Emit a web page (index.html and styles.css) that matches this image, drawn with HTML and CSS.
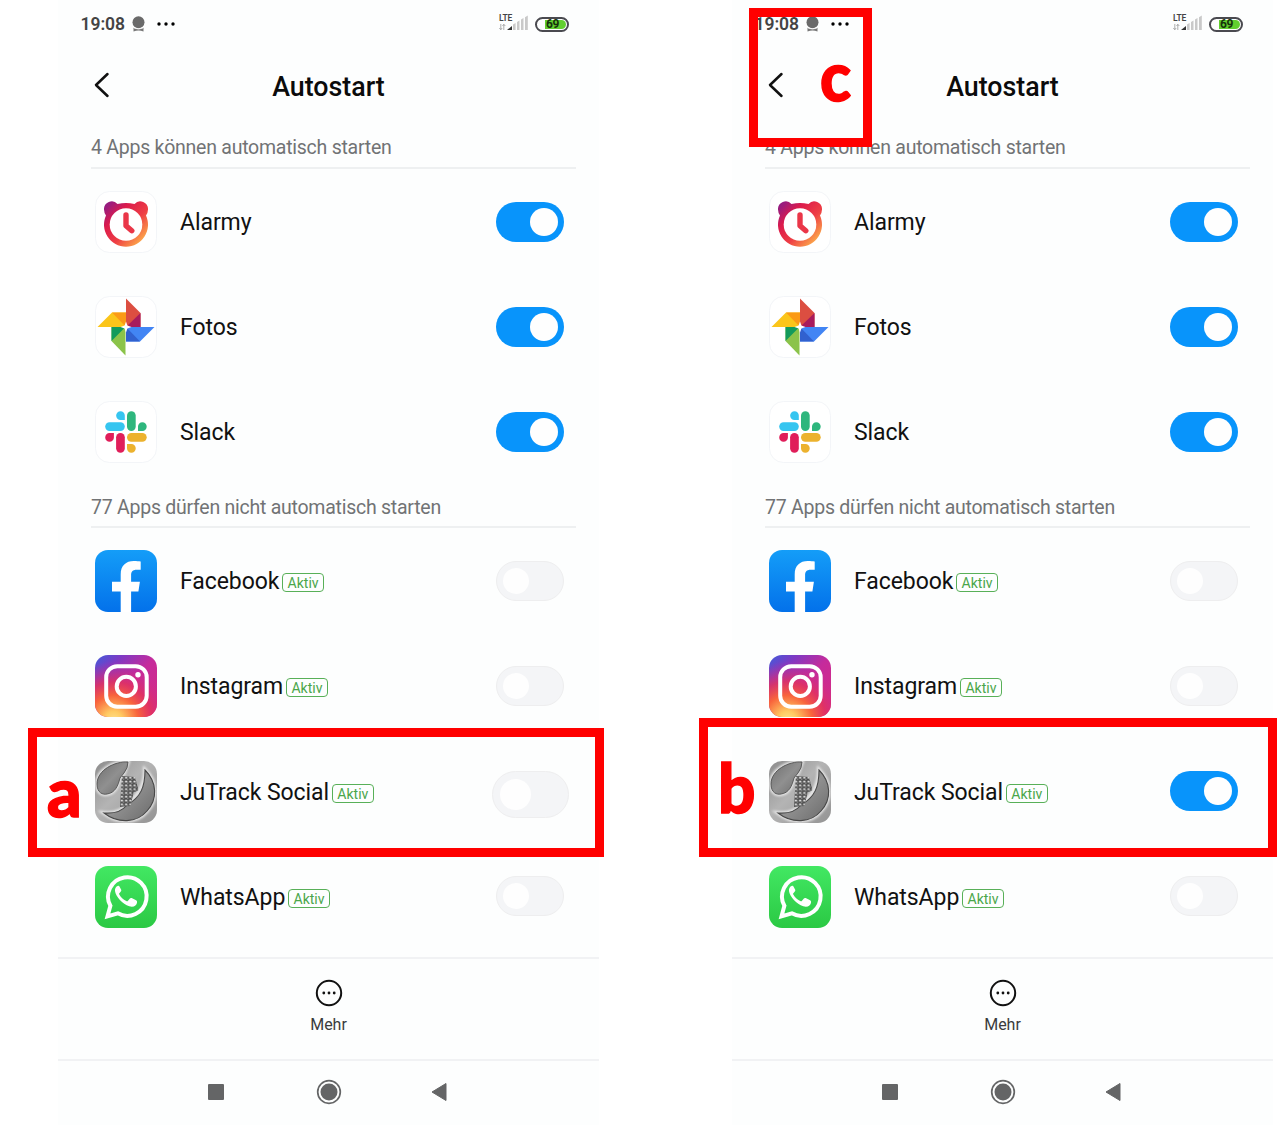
FILE: index.html
```html
<!DOCTYPE html>
<html lang="de">
<head>
<meta charset="utf-8">
<title>Autostart</title>
<link rel="stylesheet" href="styles.css">
</head>
<body>
<svg class="sprite" width="0" height="0" aria-hidden="true">
  <defs>
    <linearGradient id="gAlarm" x1="0" y1="0" x2="1" y2="1"><stop offset="0" stop-color="#8c1c86"/><stop offset=".1" stop-color="#9c1c7c"/><stop offset=".3" stop-color="#dc1b4c"/><stop offset=".58" stop-color="#ee3e44"/><stop offset=".85" stop-color="#fba04a"/></linearGradient>
    <linearGradient id="gFb" x1="0" y1="0" x2="0" y2="1"><stop offset="0" stop-color="#149df8"/><stop offset="1" stop-color="#0371ea"/></linearGradient>
    <linearGradient id="gWa" x1="0" y1="0" x2="0" y2="1"><stop offset="0" stop-color="#42e863"/><stop offset="1" stop-color="#2bc944"/></linearGradient>
    <linearGradient id="gIg" x1="0" y1="0" x2="1" y2="1"><stop offset="0" stop-color="#3f5ddb"/><stop offset=".22" stop-color="#7d3ac4"/><stop offset=".5" stop-color="#c52b9c"/><stop offset="1" stop-color="#d92b7c"/></linearGradient>
    <radialGradient id="gIg2" cx=".3" cy="1.05" r=".95"><stop offset="0" stop-color="#ffe08a"/><stop offset=".15" stop-color="#ffca62"/><stop offset=".42" stop-color="#f8643c"/><stop offset=".65" stop-color="#e2325f" stop-opacity=".85"/><stop offset="1" stop-color="#c52b9c" stop-opacity="0"/></radialGradient>
    <linearGradient id="gJu" x1="0" y1="0" x2="1" y2="1"><stop offset="0" stop-color="#8c8c8c"/><stop offset=".45" stop-color="#b4b4b4"/><stop offset="1" stop-color="#939393"/></linearGradient>
    <linearGradient id="gJu2" x1="0" y1="0" x2="1" y2="1"><stop offset="0" stop-color="#6e6e6e"/><stop offset=".5" stop-color="#909090"/><stop offset="1" stop-color="#6a6a6a"/></linearGradient>
    <pattern id="pJu" width="4.200" height="3.800" patternUnits="userSpaceOnUse"><rect width="4.200" height="3.800" fill="#4c4c4c"/><rect x=".6" y=".7" width="2.300" height="1.700" fill="#dedede"/><rect x="2.600" y="2.600" width="1.400" height=".9" fill="#a5a5a5"/></pattern>
    <filter id="soft" x="-20%" y="-20%" width="140%" height="140%"><feGaussianBlur stdDeviation="1.100"/></filter>
    <clipPath id="tile"><rect width="62" height="62" rx="13"/></clipPath>
  </defs>
  <symbol id="alarmy" viewBox="0 0 62 62">
    <rect x=".5" y=".5" width="61" height="61" rx="14" fill="#fff" stroke="#f3f5f8"/>
    <path d="M9 18.500A7.700 7.700 0 0 1 22.500 13Q31 10.800 39.500 13A7.700 7.700 0 0 1 53 18.500Q53 21.500 51 24.500A22 22 0 1 1 11 24.500Q9 21.500 9 18.500Z" fill="url(#gAlarm)"/>
    <circle cx="31" cy="33.500" r="16.300" fill="#fff"/>
    <path d="M31 24v10.700l5.800 5" fill="none" stroke="#ea3648" stroke-width="5.400" stroke-linecap="round" stroke-linejoin="round"/>
  </symbol>
  <symbol id="fotos" viewBox="0 0 62 62">
    <rect x=".5" y=".5" width="61" height="61" rx="14" fill="#fff" stroke="#f3f5f8"/>
    <path d="M31 2.500L45.500 17v14H31z" fill="#dc4e41"/><path d="M31 31L45.500 17v14z" fill="#a81b5d"/>
    <path d="M59.500 31L45 45.500H31V31z" fill="#4285f4"/><path d="M31 31L45 45.500H31z" fill="#3161cf"/>
    <path d="M30.500 59.500L16.500 45V31h14z" fill="#8bc34a"/><path d="M30.500 31L16.500 45V31z" fill="#129a5c"/>
    <path d="M2.500 31L17 16.500h14V31z" fill="#fbc51a"/><path d="M31 31L17 16.500h14z" fill="#fb9a16"/>
    <path d="M31 25.500l1.400 4.100 4.100 1.400-4.100 1.400L31 36.500l-1.400-4.100-4.100-1.400 4.100-1.400z" fill="#fff"/>
  </symbol>
  <symbol id="slack" viewBox="0 0 62 62">
    <rect x=".5" y=".5" width="61" height="61" rx="14" fill="#fff" stroke="#f3f5f8"/>
    <g fill="#36c5f0"><path d="M25.500 10.200a4.300 4.300 0 0 0 0 8.700h4.300v-4.300a4.300 4.300 0 0 0-4.300-4.400z"/><rect x="10.200" y="21.200" width="19.600" height="8.700" rx="4.350"/></g>
    <g fill="#2eb67d"><rect x="32" y="10.200" width="8.700" height="19.700" rx="4.350"/><path d="M51.700 25.500a4.350 4.350 0 0 0-8.700 0v4.400h4.300a4.350 4.350 0 0 0 4.400-4.400z"/></g>
    <g fill="#e01e5a"><rect x="21.100" y="32" width="8.700" height="19.700" rx="4.350"/><path d="M10.200 36.400a4.350 4.350 0 0 0 8.700 0V32h-4.300a4.350 4.350 0 0 0-4.400 4.400z"/></g>
    <g fill="#ecb22e"><rect x="32" y="32" width="19.700" height="8.700" rx="4.350"/><path d="M36.400 51.700a4.350 4.350 0 0 0 0-8.700H32v4.300a4.350 4.350 0 0 0 4.400 4.400z"/></g>
  </symbol>
  <symbol id="facebook" viewBox="0 0 62 62">
    <rect width="62" height="62" rx="13" fill="url(#gFb)"/>
    <path d="M25.700 62V41.500H17v-9.800h8.700v-7.200c0-9 5.200-13.500 13.200-13.500 3 0 4.500.2 6.800.6v8.100h-4c-4.300 0-5.600 2.200-5.600 5.400v6.600h8.800l-1.500 9.800h-7.300V62z" fill="#fff"/>
  </symbol>
  <symbol id="instagram" viewBox="0 0 62 62">
    <rect width="62" height="62" rx="13" fill="url(#gIg)"/><rect width="62" height="62" rx="13" fill="url(#gIg2)"/>
    <g fill="none" stroke="#fff" stroke-width="4"><rect x="11.200" y="11.200" width="40.500" height="40.500" rx="11"/><circle cx="31.300" cy="31.400" r="9.600"/></g>
    <circle cx="43" cy="19.700" r="2.700" fill="#fff"/>
  </symbol>
  <symbol id="jutrack" viewBox="0 0 62 62">
    <g clip-path="url(#tile)">
      <rect width="62" height="62" fill="url(#gJu)"/>
      <g fill="none" stroke="#e6e6e6" stroke-width="4" filter="url(#soft)"><path d="M33 1C20 0 2 9 2 23c0 9 6 11 10 10 8-1 11-8 13-16l4-5z"/><path d="M50 9c12 12 13 29 2 41-10 12-29 13-43 2 12 1 19-3 23-8 8-7 18-17 18-35z"/></g>
      <path d="M33 1C20 0 2 9 2 23c0 9 6 11 10 10 8-1 11-8 13-16l4-5q4-5 4-11z" fill="url(#gJu2)" stroke="#505050" stroke-width=".9"/>
      <path d="M50 9c12 12 13 29 2 41-10 12-29 13-43 2 12 1 19-3 23-8C46 36 50 26 50 9z" fill="url(#gJu2)" stroke="#484848" stroke-width="1.100"/>
      <path d="M27 15l13 1 3.500 13-5 3-3 13L25 46l1-17z" fill="url(#pJu)"/>
    </g>
  </symbol>
  <symbol id="whatsapp" viewBox="0 0 62 62">
    <rect width="62" height="62" rx="13" fill="url(#gWa)"/>
    <path d="M12.500 50.300l2.900-10.500a19.300 19.300 0 1 1 7.400 7.500z" fill="none" stroke="#fff" stroke-width="4"/>
    <path d="M24.600 20.700c-.5-1-1.300-.9-2-.8-1.400.3-3 2.500-2.600 5.200.8 5.500 7.600 13.400 14.300 15.200 4.400 1.200 7.300-.8 7.700-3.600.2-1.300 0-1.900-.9-2.400l-4.400-2.200c-.8-.4-1.300-.2-1.800.4l-1.900 2.300c-.5.600-1 .6-1.700.3-3.200-1.400-5.500-3.800-7-6.500-.4-.7-.2-1.100.3-1.600l1.400-1.700c.4-.5.400-1 .2-1.500z" fill="#fff"/>
  </symbol>
  <symbol id="back" viewBox="0 0 16 26"><path d="M13.500 2L2 13l11.500 11" fill="none" stroke="#111" stroke-width="2.500" stroke-linecap="round" stroke-linejoin="round"/></symbol>
  <symbol id="badge" viewBox="0 0 13 16"><circle cx="6.500" cy="6.200" r="6" fill="#6a6a6a"/><path d="M1.500 11.800q5 2.500 10 0v3.800q-5-2-10 0z" fill="#777"/><path d="M2 12q4.500 2.200 9 0" fill="none" stroke="#fff" stroke-width=".7"/></symbol>
  <symbol id="dots" viewBox="0 0 18 4"><circle cx="2" cy="2" r="1.700"/><circle cx="9" cy="2" r="1.700"/><circle cx="16" cy="2" r="1.700"/></symbol>
  <symbol id="signal" viewBox="0 0 30 18">
    <path d="M1.800 9v5.700M.3 13l1.500 1.700L3.200 13M4.800 15V9.300M3.500 11l1.300-1.700L6.300 11" fill="none" stroke="#999" stroke-width=".8"/>
    <path d="M8 15l5-4v4z" fill="#333"/>
    <path d="M14 9.500l2.600-1.500v7H14zM18 7l2.500-1.500V15H18zM22 4.500l2.500-1.500v12H22zM26 2.200L28.800.6V15H26z" fill="#c9c9c9"/>
  </symbol>
  <symbol id="more" viewBox="0 0 28 28"><circle cx="14" cy="14" r="12.200" fill="none" stroke="#111" stroke-width="2"/><g fill="#111"><circle cx="8.800" cy="14" r="1.400"/><circle cx="14" cy="14" r="1.400"/><circle cx="19.200" cy="14" r="1.400"/></g></symbol>
  <symbol id="home" viewBox="0 0 26 26"><circle cx="13" cy="13" r="11.300" fill="none" stroke="#646566" stroke-width="1.700"/><circle cx="13" cy="13" r="8.500" fill="#646566"/></symbol>
  <symbol id="navback" viewBox="0 0 16 20"><path d="M15 1.500v17L1 10z" fill="#646566" stroke="#646566" stroke-linejoin="round"/></symbol>
</svg>

<main class="board">
  <section class="phone">
    <div class="status"><span class="time">19:08</span><svg class="i-badge"><use href="#badge"/></svg><svg class="i-dots"><use href="#dots"/></svg><div class="net"><span class="lte">LTE</span><svg class="i-signal"><use href="#signal"/></svg></div><div class="battery"><span>69</span></div></div>
    <header class="title"><svg class="i-back"><use href="#back"/></svg><h1>Autostart</h1></header>
    <h2 class="group first">4 Apps können automatisch starten</h2>
    <ul class="apps">
      <li><svg class="app"><use href="#alarmy"/></svg><span class="name">Alarmy</span><i class="switch on"></i></li>
      <li><svg class="app"><use href="#fotos"/></svg><span class="name">Fotos</span><i class="switch on"></i></li>
      <li><svg class="app"><use href="#slack"/></svg><span class="name">Slack</span><i class="switch on"></i></li>
    </ul>
    <h2 class="group">77 Apps dürfen nicht automatisch starten</h2>
    <ul class="apps">
      <li><svg class="app"><use href="#facebook"/></svg><span class="name">Facebook</span><span class="tag">Aktiv</span><i class="switch"></i></li>
      <li><svg class="app"><use href="#instagram"/></svg><span class="name">Instagram</span><span class="tag">Aktiv</span><i class="switch"></i></li>
      <li><svg class="app"><use href="#jutrack"/></svg><span class="name">JuTrack Social</span><span class="tag">Aktiv</span><i class="switch large"></i></li>
      <li><svg class="app"><use href="#whatsapp"/></svg><span class="name">WhatsApp</span><span class="tag">Aktiv</span><i class="switch"></i></li>
    </ul>
    <div class="toolbar"><svg class="i-more"><use href="#more"/></svg><span>Mehr</span></div>
    <nav class="nav"><i class="recent"></i><svg class="i-home"><use href="#home"/></svg><svg class="i-navback"><use href="#navback"/></svg></nav>
  </section>

  <section class="phone">
    <div class="status"><span class="time">19:08</span><svg class="i-badge"><use href="#badge"/></svg><svg class="i-dots"><use href="#dots"/></svg><div class="net"><span class="lte">LTE</span><svg class="i-signal"><use href="#signal"/></svg></div><div class="battery"><span>69</span></div></div>
    <header class="title"><svg class="i-back"><use href="#back"/></svg><h1>Autostart</h1></header>
    <h2 class="group first">4 Apps können automatisch starten</h2>
    <ul class="apps">
      <li><svg class="app"><use href="#alarmy"/></svg><span class="name">Alarmy</span><i class="switch on"></i></li>
      <li><svg class="app"><use href="#fotos"/></svg><span class="name">Fotos</span><i class="switch on"></i></li>
      <li><svg class="app"><use href="#slack"/></svg><span class="name">Slack</span><i class="switch on"></i></li>
    </ul>
    <h2 class="group">77 Apps dürfen nicht automatisch starten</h2>
    <ul class="apps">
      <li><svg class="app"><use href="#facebook"/></svg><span class="name">Facebook</span><span class="tag">Aktiv</span><i class="switch"></i></li>
      <li><svg class="app"><use href="#instagram"/></svg><span class="name">Instagram</span><span class="tag">Aktiv</span><i class="switch"></i></li>
      <li><svg class="app"><use href="#jutrack"/></svg><span class="name">JuTrack Social</span><span class="tag">Aktiv</span><i class="switch on"></i></li>
      <li><svg class="app"><use href="#whatsapp"/></svg><span class="name">WhatsApp</span><span class="tag">Aktiv</span><i class="switch"></i></li>
    </ul>
    <div class="toolbar"><svg class="i-more"><use href="#more"/></svg><span>Mehr</span></div>
    <nav class="nav"><i class="recent"></i><svg class="i-home"><use href="#home"/></svg><svg class="i-navback"><use href="#navback"/></svg></nav>
  </section>

  <div class="mark mark-a"><b>a</b></div>
  <div class="mark mark-b"><b>b</b></div>
  <div class="mark mark-c"><b>c</b></div>
</main>
</body>
</html>
```
FILE: styles.css
```css
* { box-sizing: border-box; }
body { margin: 0; background: #fff; font-family: Roboto, "Liberation Sans", sans-serif; color: #111; }
svg { display: block; flex: none; }
.sprite { position: absolute; }
.board { position: relative; width: 1277px; height: 1125px; padding-left: 58px; display: flex; gap: 133px; overflow: hidden; }
.phone { width: 541px; height: 1125px; flex: none; display: flex; flex-direction: column; background: #fdfefe; }

.status { height: 48px; padding: 0 30px 0 22.5px; display: flex; align-items: center; }
.time { font-size: 17.5px; font-weight: 600; color: #444; line-height: 20px; letter-spacing: -.05px; }
.i-badge { width: 13px; height: 16px; margin-left: 6.5px; }
.i-dots { width: 18px; height: 4px; margin-left: 12.5px; }
.net { margin-left: auto; width: 30px; height: 18px; display: grid; }
.net > * { grid-area: 1 / 1; }
.lte { font-size: 8.5px; font-weight: 600; line-height: 8px; color: #444; margin-top: -1px; letter-spacing: -.2px; }
.i-signal { width: 30px; height: 18px; }
.battery { width: 34px; height: 15px; margin-left: 6px; padding: 1px 1px 1px 8px; border: 2px solid #4a4a50; border-radius: 8px; }
.battery span { display: block; height: 9px; border-radius: 0 5px 5px 0; background: #62cf2f; font-size: 12px; font-weight: 700; line-height: 9px; letter-spacing: -.5px; color: #17330c; padding-left: 1px; }

.title { height: 76px; display: grid; grid-template-columns: 58px 1fr 58px; align-items: center; }
.i-back { width: 16px; height: 26px; margin-left: 36.3px; margin-top: -2px; }
.title h1 { margin: 2px 0 0; text-align: center; font-size: 26.8px; font-weight: 500; line-height: 32px; color: #0b0b0b; }

.group { margin: 0 23px 0 33px; height: 44px; padding-top: 12px; border-bottom: 2px solid #eef0f1; font-size: 19.5px; font-weight: 400; line-height: 24px; letter-spacing: -.25px; color: #717375; white-space: nowrap; }
.group.first { height: 45px; padding-top: 12px; }
.apps { margin: 0; padding: 0 35.5px 0 37.3px; list-style: none; }
.apps li { height: 105.1px; display: flex; align-items: center; }
.app { width: 62px; height: 62px; margin-top: 1px; }
.name { margin-left: 22.7px; margin-top: 3px; font-size: 23px; line-height: 30px; letter-spacing: -.07px; white-space: nowrap; }
.tag { height: 19px; width: 42px; margin: 4px 0 0 2.8px; border: 1.3px solid #58b058; border-radius: 4px; font-size: 14px; line-height: 18px; text-align: center; color: #4aa64a; }
.switch { width: 68px; height: 40px; margin-left: auto; padding: 6px; display: flex; border: 1px solid #eeeeef; border-radius: 24px; background: #f4f5f7; }
.switch::before { content: ""; height: 100%; aspect-ratio: 1; border-radius: 50%; background: #fefefe; }
.switch.on { justify-content: flex-end; border: 0; background: #0894fb; }
.switch.large { width: 77px; height: 47px; margin-right: -5.5px; margin-top: 7px; padding: 7px; }

.toolbar { margin-top: auto; height: 102px; padding: 20px 0 0 0; border-top: 2px solid #f1f2f4; display: flex; flex-direction: column; align-items: center; font-size: 16px; line-height: 20px; color: #3a3b3c; gap: 8px; }
.i-more { width: 28px; height: 28px; }
.nav { height: 66px; padding-bottom: 2px; border-top: 2px solid #f1f2f4; display: grid; grid-template-columns: 1fr 26px 1fr; align-items: center; }
.recent { width: 16px; height: 16px; margin-left: 150px; border-radius: 1px; background: #646566; }
.i-home { width: 26px; height: 26px; }
.i-navback { width: 16px; height: 20px; margin-left: 89px; }

.mark { position: absolute; border: 9px solid #f00; color: #f00; }
.mark b { position: absolute; font-family: Lato, "Open Sans", sans-serif; font-size: 69px; font-weight: 900; line-height: 80px; transform-origin: 0 0; -webkit-text-stroke: 1.5px #f00; }
.mark-a { left: 28px; top: 728px; width: 576px; height: 129px; }
.mark-a b { left: 10px; top: 14px; transform: scaleX(.98); }
.mark-b { left: 699px; top: 718px; width: 578px; height: 139px; }
.mark-b b { left: 10px; top: 20px; transform: scaleX(.95); }
.mark-c { left: 749px; top: 8px; width: 123px; height: 139px; }
.mark-c b { left: 62px; top: 18px; transform: scaleX(.93); }
```
